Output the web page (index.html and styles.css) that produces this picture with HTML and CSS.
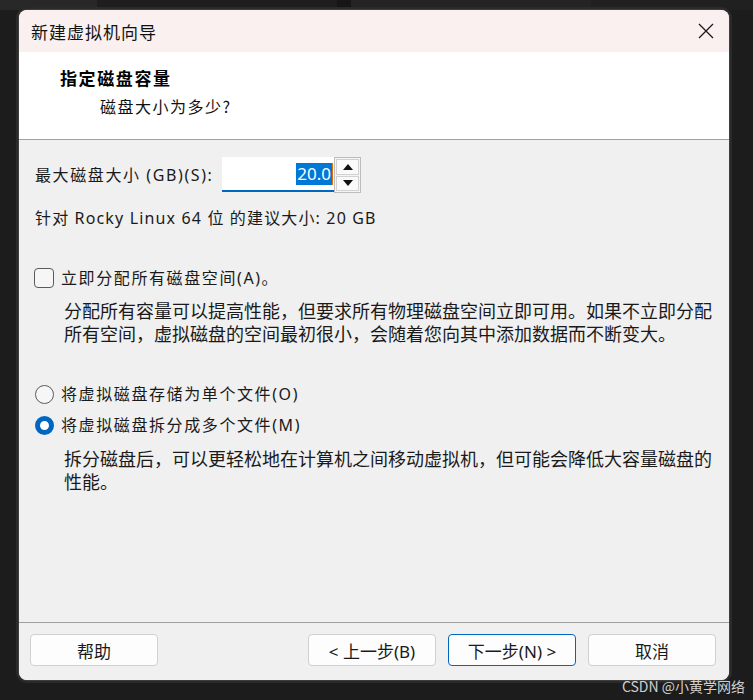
FILE: index.html
```html
<!DOCTYPE html>
<html lang="zh-CN">
<head>
<meta charset="utf-8">
<title>新建虚拟机向导</title>
<link rel="stylesheet" href="styles.css">
</head>
<body>
<div class="desk">
  <div class="topstrip">
    <span class="seg seg-a"></span>
    <span class="seg seg-b"></span>
    <span class="seg seg-c"></span>
    <span class="seg seg-d"></span>
    <span class="seg seg-e"></span>
  </div>
  <div class="window">
    <div class="titlebar">
      <span class="title">新建虚拟机向导</span>
      <svg class="close" width="16" height="16" viewBox="0 0 16 16"><path d="M1 1 L15 15 M15 1 L1 15" stroke="#1a1a1a" stroke-width="1.3" fill="none"/></svg>
    </div>
    <div class="header">
      <div class="h-title">指定磁盘容量</div>
      <div class="h-sub">磁盘大小为多少?</div>
    </div>
    <div class="content">
      <div class="size-row">
        <span class="label">最大磁盘大小 (GB)(S):</span>
        <div class="spinbox">
          <div class="input"><span class="sel">20.0</span><span class="caret"></span></div>
          <div class="spin">
            <div class="spin-btn"><svg width="10" height="6" viewBox="0 0 10 6"><path d="M5 0 L10 6 L0 6 Z" fill="#111"/></svg></div>
            <div class="spin-btn"><svg width="10" height="6" viewBox="0 0 10 6"><path d="M0 0 L10 0 L5 6 Z" fill="#111"/></svg></div>
          </div>
        </div>
      </div>
      <div class="recommend">针对 Rocky Linux 64 位 的建议大小: 20 GB</div>
      <div class="opt opt-check">
        <span class="checkbox"></span>
        <span class="opt-label">立即分配所有磁盘空间(A)。</span>
      </div>
      <p class="desc desc-1">分配所有容量可以提高性能，但要求所有物理磁盘空间立即可用。如果不立即分配<br>所有空间，虚拟磁盘的空间最初很小，会随着您向其中添加数据而不断变大。</p>
      <div class="opt opt-radio1">
        <span class="radio"></span>
        <span class="opt-label">将虚拟磁盘存储为单个文件(O)</span>
      </div>
      <div class="opt opt-radio2">
        <span class="radio checked"></span>
        <span class="opt-label">将虚拟磁盘拆分成多个文件(M)</span>
      </div>
      <p class="desc desc-2">拆分磁盘后，可以更轻松地在计算机之间移动虚拟机，但可能会降低大容量磁盘的<br>性能。</p>
    </div>
    <div class="footer">
      <button class="btn">帮助</button>
      <span class="spacer"></span>
      <button class="btn">&lt; 上一步(B)</button>
      <button class="btn primary">下一步(N) &gt;</button>
      <button class="btn">取消</button>
    </div>
  </div>
  <div class="watermark">CSDN @小黄学网络</div>
</div>
</body>
</html>
```
FILE: styles.css
```css
html, body {
  margin: 0;
  padding: 0;
  background: #1c1c1c;
  width: 753px;
  height: 700px;
  overflow: hidden;
}
body {
  font-family: "Noto Sans", "Noto Sans CJK SC", sans-serif;
  color: #1a1a1a;
}
.desk {
  display: flex;
  flex-direction: column;
}
.topstrip {
  height: 10px;
  display: flex;
}
.seg { height: 100%; }
.seg-a { width: 97px; background: #282828; }
.seg-b { width: 240px; background: #1e1e1e; }
.seg-c { width: 14px; background: #161616; }
.seg-d { width: 240px; background: #242424; }
.seg-e { flex: 1; background: #202020; }

.window {
  margin-left: 19px;
  width: 710px;
  height: 670px;
  border-radius: 8px;
  overflow: hidden;
  box-shadow: 0 0 0 1px #3e3e3e, 0 0 0 3px #2a2a2a;
  display: flex;
  flex-direction: column;
  background: #f0f0f0;
}
.titlebar {
  height: 42px;
  flex: none;
  background: #f9f0ef;
  display: flex;
  align-items: center;
  justify-content: space-between;
  padding: 0 15px 0 12px;
}
.title {
  font-family: "Noto Sans CJK SC", sans-serif;
  font-size: 17px;
  letter-spacing: 1px;
  font-weight: 400;
  color: #111;
}
.close { display: block; }

.header {
  height: 88px;
  flex: none;
  background: #fff;
  border-bottom: 1px solid #a0a0a0;
  padding: 14px 0 0 41px;
  box-sizing: border-box;
}
.h-title {
  font-family: "Noto Sans CJK SC", sans-serif;
  font-weight: 700;
  font-size: 17px;
  letter-spacing: 1.6px;
  line-height: 24px;
  color: #000;
}
.h-sub {
  font-family: "Noto Sans CJK SC", sans-serif;
  font-size: 16px;
  letter-spacing: 1.5px;
  line-height: 24px;
  margin-top: 4px;
  padding-left: 40px;
  color: #111;
}

.content {
  flex: 1;
  padding: 17px 0 0 16px;
  display: flex;
  flex-direction: column;
  background: #f0f0f0;
}
.size-row {
  display: flex;
  align-items: center;
  height: 36px;
}
.label, .recommend {
  font-size: 16px;
  line-height: 22px;
  letter-spacing: 1.15px;
}
.label { width: 187px; white-space: nowrap; letter-spacing: 1.6px; }
.spinbox {
  display: flex;
  align-items: flex-start;
  height: 36px;
}
.input {
  width: 112px;
  height: 35px;
  box-sizing: border-box;
  background: #fff;
  border-bottom: 2px solid #0067c0;
  display: flex;
  align-items: center;
  justify-content: flex-end;
  padding-right: 1px;
}
.sel {
  background: #0078d7;
  color: #fff;
  font-size: 17px;
  line-height: 22px;
  padding: 0 1px;
}
.caret {
  width: 1px;
  height: 22px;
  background: #e07010;
}
.spin {
  width: 27px;
  height: 36px;
  box-sizing: border-box;
  border: 1px solid #bdbdbd;
  background: #f5f5f5;
  display: flex;
  flex-direction: column;
  padding: 1px;
  gap: 1px;
}
.spin-btn {
  flex: 1;
  border: 1px solid #d2d2d2;
  background: #fafafa;
  display: flex;
  align-items: center;
  justify-content: center;
}
.spin-btn svg { display: block; }

.recommend {
  margin-top: 14px;
}
.opt {
  display: flex;
  align-items: center;
  height: 22px;
}
.opt-label {
  font-size: 16px;
  letter-spacing: 1.6px;
  line-height: 22px;
  margin-left: 7px;
}
.opt-check { margin-top: 38px; }
.checkbox {
  width: 20px;
  height: 20px;
  box-sizing: border-box;
  border: 1px solid #5a5a5a;
  border-radius: 4px;
  background: #f6f6f6;
  margin-left: -1px;
}
.radio {
  width: 19px;
  height: 19px;
  box-sizing: border-box;
  border: 1px solid #5a5a5a;
  border-radius: 50%;
  background: #f6f6f6;
}
.radio.checked {
  border: 5px solid #0067c0;
  background: #fff;
}
.opt-radio1 { margin-top: 37px; height: 24px; }
.opt-radio2 { margin-top: 7px; height: 24px; }
.desc {
  margin: 10px 0 0 29px;
  font-family: "Noto Sans CJK SC", sans-serif;
  font-size: 18px;
  line-height: 23px;
  white-space: nowrap;
  color: #1a1a1a;
}

.footer {
  height: 58px;
  flex: none;
  border-top: 1px solid #a0a0a0;
  background: #f0f0f0;
  display: flex;
  align-items: flex-start;
  padding: 11px 0 0 11px;
  gap: 12px;
  box-sizing: border-box;
}
.spacer { width: 126px; }
.btn {
  width: 128px;
  height: 32px;
  border: 1px solid #d0d0d0;
  border-radius: 4px;
  background: #fdfdfd;
  font-family: "Noto Sans", "Noto Sans CJK SC", sans-serif;
  font-size: 17px;
  color: #1a1a1a;
  padding: 0;
}
.btn.primary {
  border-color: #0067c0;
}
.watermark {
  align-self: flex-end;
  margin: -2px 8px 0 0;
  font-family: "Noto Sans CJK SC", sans-serif;
  font-size: 14px;
  line-height: 16px;
  color: #cfcfcf;
}
```
